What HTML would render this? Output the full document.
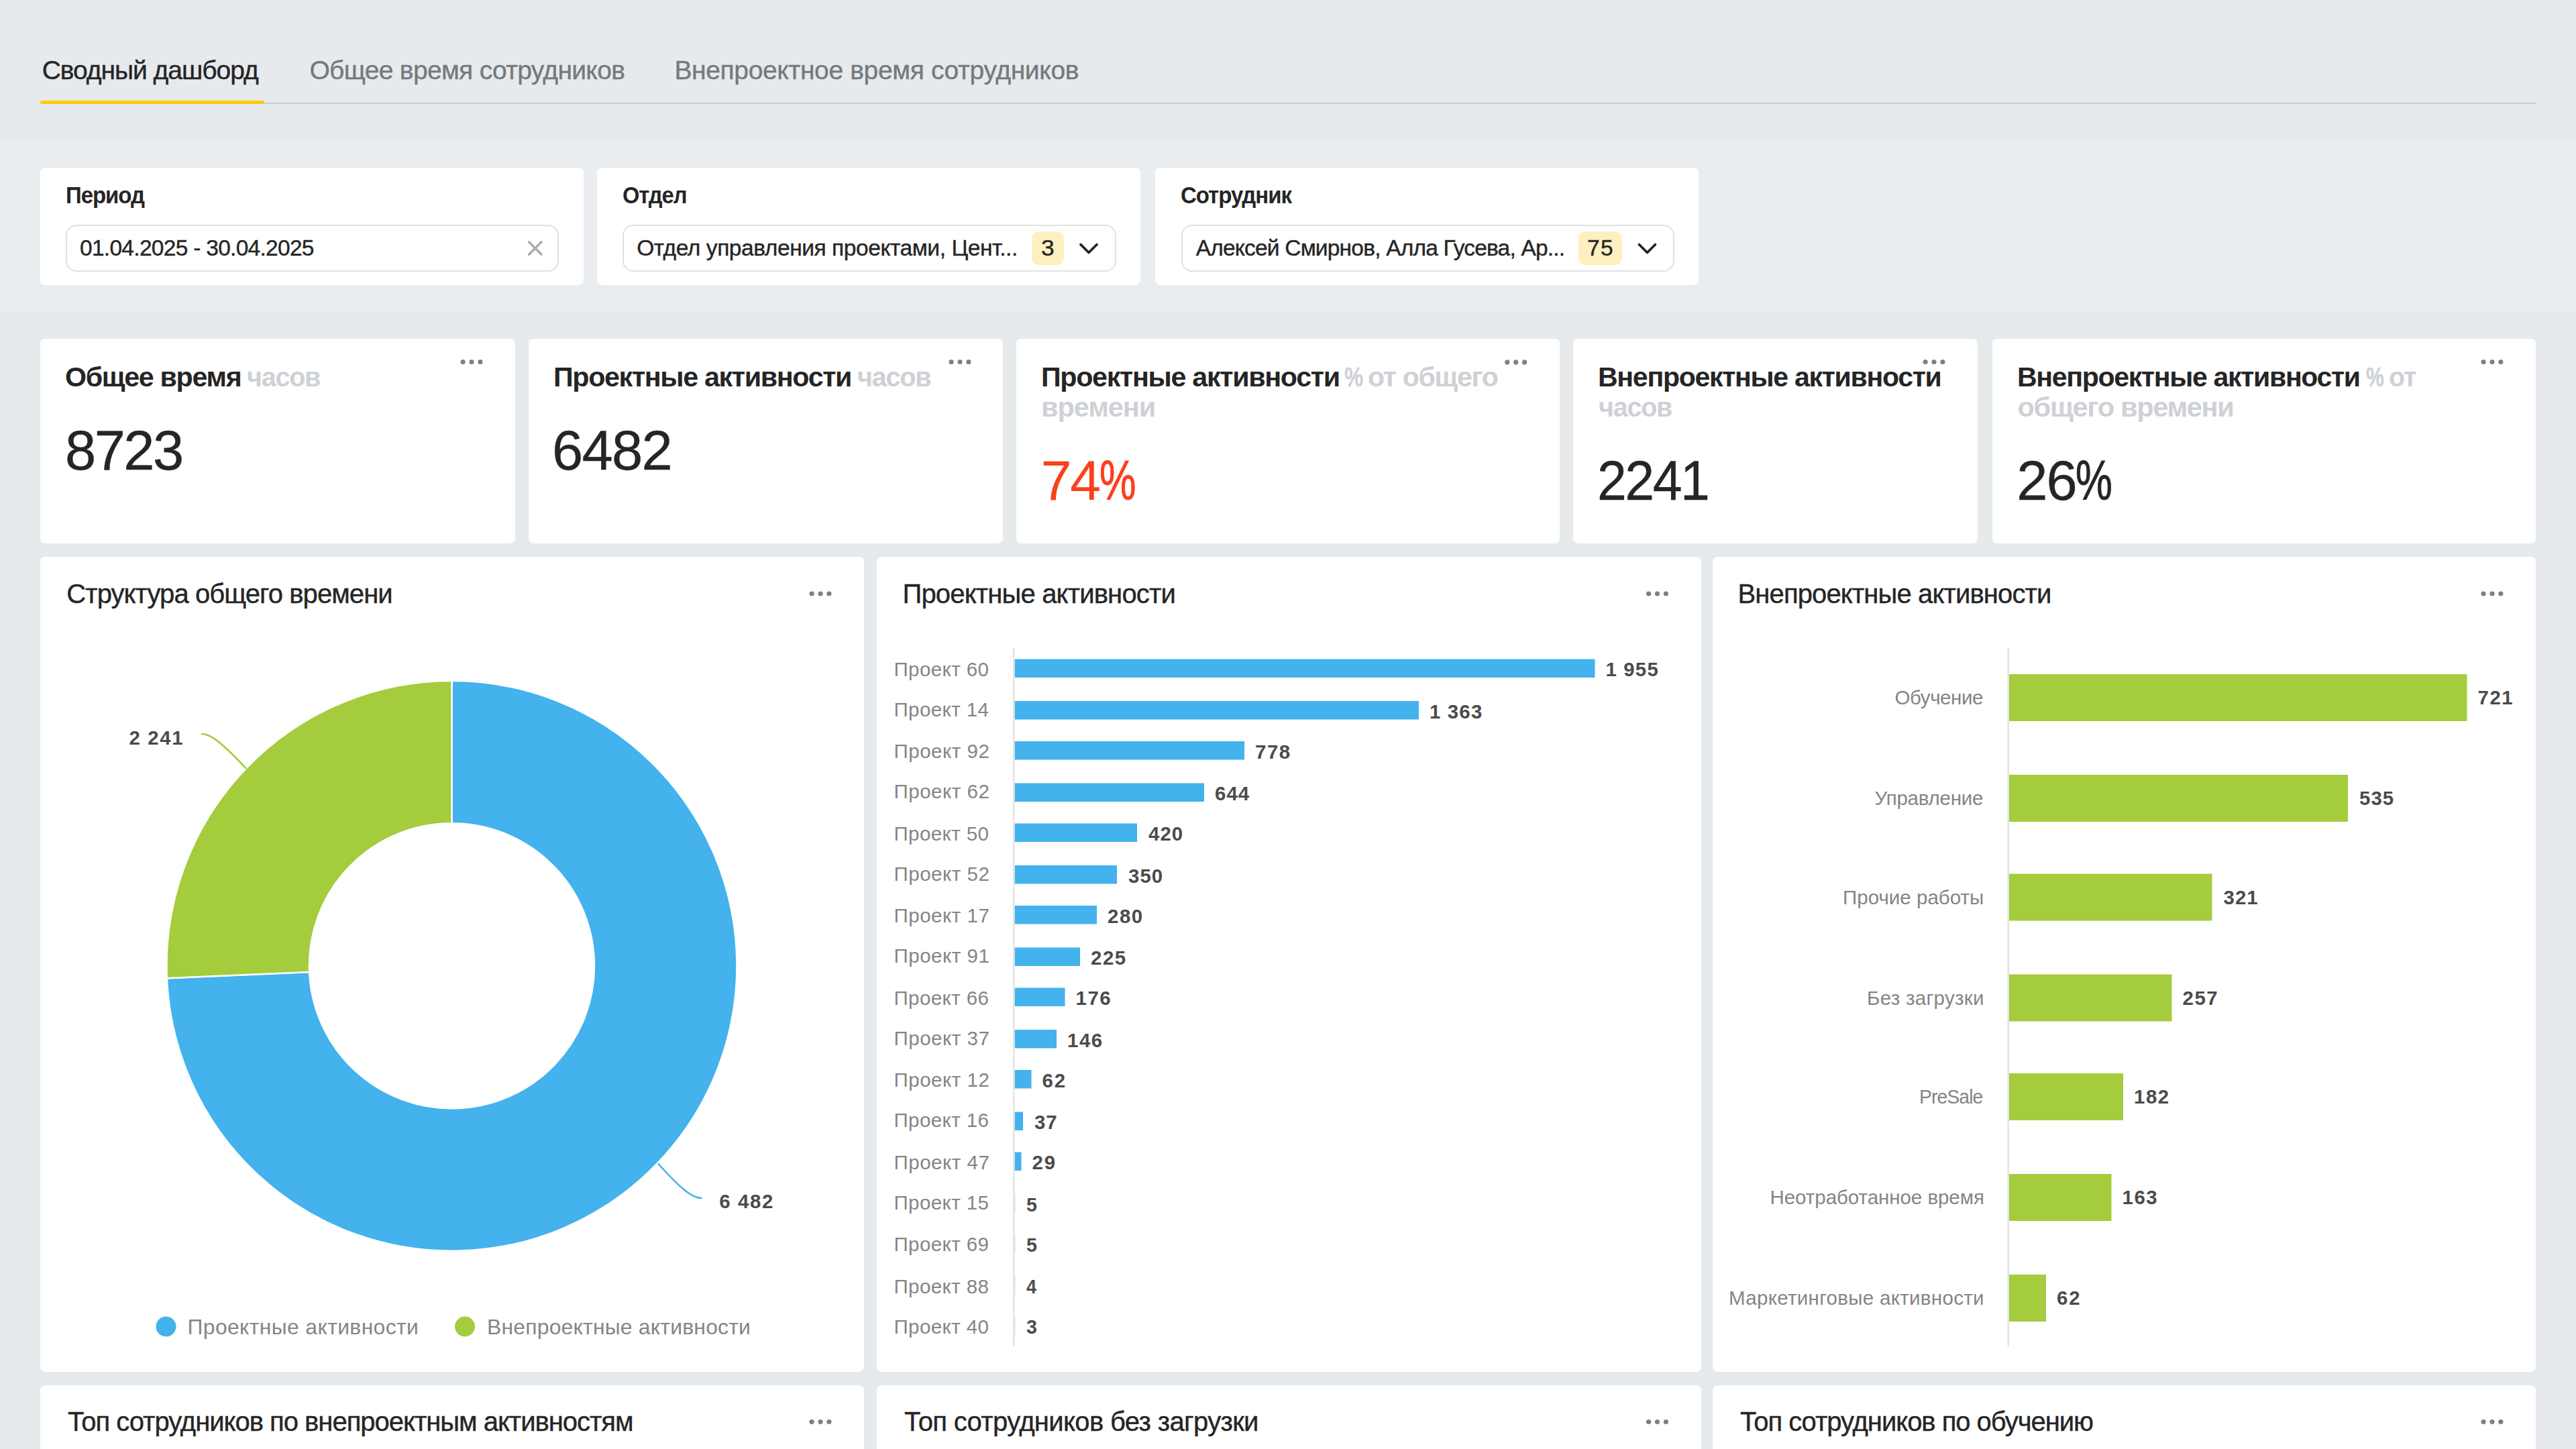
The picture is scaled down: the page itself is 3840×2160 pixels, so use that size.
<!DOCTYPE html>
<html lang="ru"><head><meta charset="utf-8"><title>Сводный дашборд</title>
<style>
html,body{margin:0;padding:0}
body{width:3840px;height:2160px;overflow:hidden;position:relative;background:#e6eaed;font-family:"Liberation Sans", sans-serif}
.band{position:absolute;left:0;top:210px;width:3840px;height:255px;background:#e9edf0}
.card{position:absolute;background:#fff}
.inp{position:absolute;box-sizing:border-box;border:2.5px solid #e2e2e2;border-radius:16px;background:#fff}
.badge{position:absolute;background:#fdf0c0;border-radius:11px}
.t{position:absolute;white-space:pre;line-height:1;font-family:"Liberation Sans", sans-serif;transform-origin:0 0}
.tabline{position:absolute;left:60px;top:152.5px;width:3720px;height:2.5px;background:#ccd0d4}
.tabsel{position:absolute;left:60px;top:150px;width:334px;height:5px;background:#ffcc00;border-radius:0 0 4px 4px}
svg{position:absolute;left:0;top:0}
</style></head><body>
<div class="band"></div>
<div class="tabline"></div><div class="tabsel"></div>
<div class="card" style="left:60px;top:250px;width:810px;height:175px;border-radius:7.5px"></div><div class="card" style="left:890px;top:250px;width:810px;height:175px;border-radius:7.5px"></div><div class="card" style="left:1722px;top:250px;width:810px;height:175px;border-radius:7.5px"></div><div class="card" style="left:60px;top:505px;width:708px;height:305px;border-radius:7.5px"></div><div class="card" style="left:788px;top:505px;width:707px;height:305px;border-radius:7.5px"></div><div class="card" style="left:1515px;top:505px;width:810px;height:305px;border-radius:7.5px"></div><div class="card" style="left:2345px;top:505px;width:602.5px;height:305px;border-radius:7.5px"></div><div class="card" style="left:2970px;top:505px;width:810px;height:305px;border-radius:7.5px"></div><div class="card" style="left:60px;top:830px;width:1227.5px;height:1214.5px;border-radius:7.5px"></div><div class="card" style="left:60px;top:2065px;width:1227.5px;height:135px;border-radius:7.5px"></div><div class="card" style="left:1307px;top:830px;width:1228.5px;height:1214.5px;border-radius:7.5px"></div><div class="card" style="left:1307px;top:2065px;width:1228.5px;height:135px;border-radius:7.5px"></div><div class="card" style="left:2552.5px;top:830px;width:1227.5px;height:1214.5px;border-radius:7.5px"></div><div class="card" style="left:2552.5px;top:2065px;width:1227.5px;height:135px;border-radius:7.5px"></div>
<div class="inp" style="left:98.2px;top:334.7px;width:735.1px;height:70.6px"></div><div class="inp" style="left:928.2px;top:334.7px;width:735.5px;height:70.6px"></div><div class="inp" style="left:1760.8px;top:334.7px;width:735.5px;height:70.6px"></div>
<div class="badge" style="left:1538px;top:345px;width:47.7px;height:50px"></div><div class="badge" style="left:2352.6px;top:345px;width:65.6px;height:50px"></div>
<svg width="3840" height="2160" viewBox="0 0 3840 2160">
<rect x="1512.5" y="982.5" width="865.0" height="27.5" fill="#43b2ed"/>
<rect x="1512.5" y="1045.0" width="602.5" height="27.5" fill="#43b2ed"/>
<rect x="1512.5" y="1105.0" width="342.5" height="27.5" fill="#43b2ed"/>
<rect x="1512.5" y="1167.5" width="282.5" height="27.5" fill="#43b2ed"/>
<rect x="1512.5" y="1227.5" width="182.5" height="27.5" fill="#43b2ed"/>
<rect x="1512.5" y="1290.0" width="152.5" height="27.5" fill="#43b2ed"/>
<rect x="1512.5" y="1350.0" width="122.5" height="27.5" fill="#43b2ed"/>
<rect x="1512.5" y="1412.5" width="97.5" height="27.5" fill="#43b2ed"/>
<rect x="1512.5" y="1472.5" width="75.0" height="27.5" fill="#43b2ed"/>
<rect x="1512.5" y="1535.0" width="62.5" height="27.5" fill="#43b2ed"/>
<rect x="1512.5" y="1595.0" width="25.0" height="27.5" fill="#43b2ed"/>
<rect x="1512.5" y="1657.5" width="12.5" height="27.5" fill="#43b2ed"/>
<rect x="1512.5" y="1717.5" width="10.0" height="27.5" fill="#43b2ed"/>
<rect x="1512.5" y="1780.0" width="1" height="27.5" fill="#43b2ed" opacity="0.35"/>
<rect x="1512.5" y="1840.0" width="1" height="27.5" fill="#43b2ed" opacity="0.35"/>
<rect x="1512.5" y="1902.5" width="1" height="27.5" fill="#43b2ed" opacity="0.35"/>
<rect x="1512.5" y="1962.5" width="1" height="27.5" fill="#43b2ed" opacity="0.35"/>
<rect x="2995" y="1005" width="682.5" height="70" fill="#a4cc3c"/>
<rect x="2995" y="1155" width="505.0" height="70" fill="#a4cc3c"/>
<rect x="2995" y="1302.5" width="302.5" height="70" fill="#a4cc3c"/>
<rect x="2995" y="1452.5" width="242.5" height="70" fill="#a4cc3c"/>
<rect x="2995" y="1600" width="170.0" height="70" fill="#a4cc3c"/>
<rect x="2995" y="1750" width="152.5" height="70" fill="#a4cc3c"/>
<rect x="2995" y="1900" width="55.0" height="70" fill="#a4cc3c"/>
<path d="M673.45,1014.8 A425.0,425.0 0 1 1 248.85,1458.24 L461.15,1449.02 A212.5,212.5 0 1 0 673.45,1227.3 Z" fill="#43b2ed" stroke="#fff" stroke-width="2.5" stroke-linejoin="round"/>
<path d="M248.85,1458.24 A425.0,425.0 0 0 1 673.45,1014.8 L673.45,1227.3 A212.5,212.5 0 0 0 461.15,1449.02 Z" fill="#a4cc3c" stroke="#fff" stroke-width="2.5" stroke-linejoin="round"/>
<path d="M300,1094 C312,1094 325,1101 367.3,1146" fill="none" stroke="#a4cc3c" stroke-width="2.5"/>
<path d="M1046.5,1786 C1034,1786 1020,1778 981,1734.5" fill="none" stroke="#43b2ed" stroke-width="2.5"/>
<circle cx="247.5" cy="1977.5" r="15" fill="#43b2ed"/><circle cx="693" cy="1977.5" r="15" fill="#a4cc3c"/>
<rect x="1510" y="965" width="2.5" height="1042" fill="#e3e3e3"/>
<rect x="2992.5" y="965" width="2.5" height="1042" fill="#e3e3e3"/>
<circle cx="690.1" cy="539.5" r="3.6" fill="#7f7f7f"/><circle cx="703.0" cy="539.5" r="3.6" fill="#7f7f7f"/><circle cx="715.9" cy="539.5" r="3.6" fill="#7f7f7f"/>
<circle cx="1418.1" cy="539.5" r="3.6" fill="#7f7f7f"/><circle cx="1431.0" cy="539.5" r="3.6" fill="#7f7f7f"/><circle cx="1443.9" cy="539.5" r="3.6" fill="#7f7f7f"/>
<circle cx="2246.8" cy="539.9" r="3.6" fill="#7f7f7f"/><circle cx="2259.7" cy="539.9" r="3.6" fill="#7f7f7f"/><circle cx="2272.6" cy="539.9" r="3.6" fill="#7f7f7f"/>
<circle cx="2870.1" cy="539.5" r="3.6" fill="#7f7f7f"/><circle cx="2883.0" cy="539.5" r="3.6" fill="#7f7f7f"/><circle cx="2895.9" cy="539.5" r="3.6" fill="#7f7f7f"/>
<circle cx="3702.1" cy="539.5" r="3.6" fill="#7f7f7f"/><circle cx="3715.0" cy="539.5" r="3.6" fill="#7f7f7f"/><circle cx="3727.9" cy="539.5" r="3.6" fill="#7f7f7f"/>
<circle cx="1210.1" cy="885" r="3.6" fill="#7f7f7f"/><circle cx="1223.0" cy="885" r="3.6" fill="#7f7f7f"/><circle cx="1235.9" cy="885" r="3.6" fill="#7f7f7f"/>
<circle cx="2457.6" cy="885" r="3.6" fill="#7f7f7f"/><circle cx="2470.5" cy="885" r="3.6" fill="#7f7f7f"/><circle cx="2483.4" cy="885" r="3.6" fill="#7f7f7f"/>
<circle cx="3702.1" cy="885" r="3.6" fill="#7f7f7f"/><circle cx="3715.0" cy="885" r="3.6" fill="#7f7f7f"/><circle cx="3727.9" cy="885" r="3.6" fill="#7f7f7f"/>
<circle cx="1210.1" cy="2119.5" r="3.6" fill="#7f7f7f"/><circle cx="1223.0" cy="2119.5" r="3.6" fill="#7f7f7f"/><circle cx="1235.9" cy="2119.5" r="3.6" fill="#7f7f7f"/>
<circle cx="2457.6" cy="2119.5" r="3.6" fill="#7f7f7f"/><circle cx="2470.5" cy="2119.5" r="3.6" fill="#7f7f7f"/><circle cx="2483.4" cy="2119.5" r="3.6" fill="#7f7f7f"/>
<circle cx="3702.1" cy="2119.5" r="3.6" fill="#7f7f7f"/><circle cx="3715.0" cy="2119.5" r="3.6" fill="#7f7f7f"/><circle cx="3727.9" cy="2119.5" r="3.6" fill="#7f7f7f"/>
<path d="M788.6,360.8 L807,379.2 M807,360.8 L788.6,379.2" stroke="#adadad" stroke-width="3.6" stroke-linecap="round" fill="none"/>
<path d="M1611,364.5 L1623,376.5 L1635,364.5" stroke="#252525" stroke-width="3.8" stroke-linecap="round" stroke-linejoin="round" fill="none"/>
<path d="M2443.5,364.5 L2455.5,376.5 L2467.5,364.5" stroke="#252525" stroke-width="3.8" stroke-linecap="round" stroke-linejoin="round" fill="none"/>
</svg>
<span class="t" style="left:62.7px;top:84.8px;font-size:39px;font-weight:400;color:#252525;letter-spacing:-1.04px;-webkit-text-stroke:0.4px #252525">Сводный дашборд</span>
<span class="t" style="left:461.4px;top:84.8px;font-size:39px;font-weight:400;color:#76797c;letter-spacing:-0.68px;-webkit-text-stroke:0.4px #76797c">Общее время сотрудников</span>
<span class="t" style="left:1005.4px;top:84.8px;font-size:39px;font-weight:400;color:#76797c;letter-spacing:-0.36px;-webkit-text-stroke:0.4px #76797c">Внепроектное время сотрудников</span>
<span class="t" style="left:97.9px;top:273.9px;font-size:34.2px;font-weight:700;color:#252525;letter-spacing:-1.09px;transform:scaleX(0.9648)">Период</span>
<span class="t" style="left:927.5px;top:273.9px;font-size:34.2px;font-weight:700;color:#252525;letter-spacing:-1.09px;transform:scaleX(0.9550)">Отдел</span>
<span class="t" style="left:1760.0px;top:273.9px;font-size:34.2px;font-weight:700;color:#252525;letter-spacing:-1.09px;transform:scaleX(0.9658)">Сотрудник</span>
<span class="t" style="left:119.0px;top:352.5px;font-size:33.5px;font-weight:400;color:#252525;letter-spacing:-0.71px;-webkit-text-stroke:0.4px #252525">01.04.2025 - 30.04.2025</span>
<span class="t" style="left:949.2px;top:352.5px;font-size:33.5px;font-weight:400;color:#252525;letter-spacing:-0.43px;-webkit-text-stroke:0.4px #252525">Отдел управления проектами, Цент...</span>
<span class="t" style="left:1782.7px;top:352.5px;font-size:33.5px;font-weight:400;color:#252525;letter-spacing:-0.80px;-webkit-text-stroke:0.4px #252525">Алексей Смирнов, Алла Гусева, Ар...</span>
<span class="t" style="left:1551.9px;top:352.5px;font-size:33.5px;font-weight:400;color:#252525;letter-spacing:0.00px;transform:scaleX(1.0588);-webkit-text-stroke:0.4px #252525">3</span>
<span class="t" style="left:2366.0px;top:352.5px;font-size:33.5px;font-weight:400;color:#252525;letter-spacing:1.37px;-webkit-text-stroke:0.4px #252525">75</span>
<span class="t" style="left:97.0px;top:540.7px;font-size:41.5px;font-weight:700;color:#252525;letter-spacing:-1.33px;transform:scaleX(0.9926)">Общее время</span>
<span class="t" style="left:367.5px;top:540.7px;font-size:41.5px;font-weight:700;color:#ced1d5;letter-spacing:-1.33px;transform:scaleX(0.9533)">часов</span>
<span class="t" style="left:825.0px;top:540.7px;font-size:41.5px;font-weight:700;color:#252525;letter-spacing:-1.33px;transform:scaleX(0.9931)">Проектные активности</span>
<span class="t" style="left:1277.8px;top:540.7px;font-size:41.5px;font-weight:700;color:#ced1d5;letter-spacing:-1.33px;transform:scaleX(0.9551)">часов</span>
<span class="t" style="left:1552.0px;top:540.7px;font-size:41.5px;font-weight:700;color:#252525;letter-spacing:-1.33px;transform:scaleX(0.9945)">Проектные активности</span>
<span class="t" style="left:2004.1px;top:540.7px;font-size:41.5px;font-weight:700;color:#ced1d5;letter-spacing:0.00px;transform:scaleX(0.7629);-webkit-text-stroke:0.50px #ced1d5">%</span>
<span class="t" style="left:2039.0px;top:540.7px;font-size:41.5px;font-weight:700;color:#ced1d5;letter-spacing:-1.33px;transform:scaleX(0.9904)">от общего</span>
<span class="t" style="left:1552.0px;top:586.2px;font-size:41.5px;font-weight:700;color:#ced1d5;letter-spacing:-1.09px">времени</span>
<span class="t" style="left:2382.0px;top:540.7px;font-size:41.5px;font-weight:700;color:#252525;letter-spacing:-1.33px;transform:scaleX(0.9900)">Внепроектные активности</span>
<span class="t" style="left:2382.5px;top:586.2px;font-size:41.5px;font-weight:700;color:#ced1d5;letter-spacing:-1.33px;transform:scaleX(0.9533)">часов</span>
<span class="t" style="left:3007.3px;top:540.7px;font-size:41.5px;font-weight:700;color:#252525;letter-spacing:-1.33px;transform:scaleX(0.9888)">Внепроектные активности</span>
<span class="t" style="left:3526.6px;top:540.7px;font-size:41.5px;font-weight:700;color:#ced1d5;letter-spacing:0.00px;transform:scaleX(0.7257);-webkit-text-stroke:0.50px #ced1d5">%</span>
<span class="t" style="left:3561.4px;top:540.7px;font-size:41.5px;font-weight:700;color:#ced1d5;letter-spacing:-1.33px;transform:scaleX(0.9526)">от</span>
<span class="t" style="left:3007.6px;top:586.2px;font-size:41.5px;font-weight:700;color:#ced1d5;letter-spacing:-1.33px">общего времени</span>
<span class="t" style="left:97.1px;top:629.5px;font-size:83px;font-weight:400;color:#252525;letter-spacing:-2.56px;-webkit-text-stroke:0.4px #252525">8723</span>
<span class="t" style="left:823.0px;top:629.5px;font-size:83px;font-weight:400;color:#252525;letter-spacing:-1.66px;-webkit-text-stroke:0.4px #252525">6482</span>
<span class="t" style="left:1551.5px;top:674.5px;font-size:83px;font-weight:400;color:#fc3f1d;letter-spacing:-2.66px">74</span>
<span class="t" style="left:1639.4px;top:674.5px;font-size:83px;font-weight:400;color:#fc3f1d;letter-spacing:0.00px;transform:scaleX(0.7377);-webkit-text-stroke:1.00px #fc3f1d">%</span>
<span class="t" style="left:2381.4px;top:674.5px;font-size:83px;font-weight:400;color:#252525;letter-spacing:-2.66px;transform:scaleX(0.9504);-webkit-text-stroke:0.4px #252525">2241</span>
<span class="t" style="left:3006.2px;top:674.5px;font-size:83px;font-weight:400;color:#252525;letter-spacing:-1.76px;-webkit-text-stroke:0.4px #252525">26</span>
<span class="t" style="left:3094.1px;top:674.5px;font-size:83px;font-weight:400;color:#252525;letter-spacing:0.00px;transform:scaleX(0.7420);-webkit-text-stroke:1.00px #252525">%</span>
<span class="t" style="left:99.3px;top:864.5px;font-size:40px;font-weight:400;color:#252525;letter-spacing:-0.93px;-webkit-text-stroke:0.4px #252525">Структура общего времени</span>
<span class="t" style="left:1345.5px;top:864.5px;font-size:40px;font-weight:400;color:#252525;letter-spacing:-0.83px;-webkit-text-stroke:0.4px #252525">Проектные активности</span>
<span class="t" style="left:2590.5px;top:864.5px;font-size:40px;font-weight:400;color:#252525;letter-spacing:-0.87px;-webkit-text-stroke:0.4px #252525">Внепроектные активности</span>
<span class="t" style="left:101.0px;top:2098.5px;font-size:40px;font-weight:400;color:#252525;letter-spacing:-1.01px;-webkit-text-stroke:0.4px #252525">Топ сотрудников по внепроектным активностям</span>
<span class="t" style="left:1348.0px;top:2098.5px;font-size:40px;font-weight:400;color:#252525;letter-spacing:-0.64px;-webkit-text-stroke:0.4px #252525">Топ сотрудников без загрузки</span>
<span class="t" style="left:2594.0px;top:2098.5px;font-size:40px;font-weight:400;color:#252525;letter-spacing:-1.04px;-webkit-text-stroke:0.4px #252525">Топ сотрудников по обучению</span>
<span class="t" style="left:192.5px;top:1085.0px;font-size:29.4px;font-weight:700;color:#4b4b4b;letter-spacing:1.65px">2 241</span>
<span class="t" style="left:1072.3px;top:1775.5px;font-size:29.4px;font-weight:700;color:#4b4b4b;letter-spacing:1.62px">6 482</span>
<span class="t" style="left:279.5px;top:1963.0px;font-size:31.8px;font-weight:400;color:#858585;letter-spacing:0.42px">Проектные активности</span>
<span class="t" style="left:726.0px;top:1963.0px;font-size:31.8px;font-weight:400;color:#858585;letter-spacing:0.26px">Внепроектные активности</span>
<span class="t" style="left:1332.5px;top:982.7px;font-size:29.5px;font-weight:400;color:#858585;letter-spacing:0.40px">Проект 60</span>
<span class="t" style="left:2393.5px;top:983.0px;font-size:29.4px;font-weight:700;color:#4b4b4b;letter-spacing:1.17px">1 955</span>
<span class="t" style="left:1332.5px;top:1042.7px;font-size:29.5px;font-weight:400;color:#858585;letter-spacing:0.40px">Проект 14</span>
<span class="t" style="left:2131.0px;top:1045.5px;font-size:29.4px;font-weight:700;color:#4b4b4b;letter-spacing:1.17px">1 363</span>
<span class="t" style="left:1332.5px;top:1105.2px;font-size:29.5px;font-weight:400;color:#858585;letter-spacing:0.53px">Проект 92</span>
<span class="t" style="left:1871.0px;top:1105.5px;font-size:29.4px;font-weight:700;color:#4b4b4b;letter-spacing:1.55px">778</span>
<span class="t" style="left:1332.5px;top:1165.2px;font-size:29.5px;font-weight:400;color:#858585;letter-spacing:0.53px">Проект 62</span>
<span class="t" style="left:1811.0px;top:1168.0px;font-size:29.4px;font-weight:700;color:#4b4b4b;letter-spacing:1.05px">644</span>
<span class="t" style="left:1332.5px;top:1227.7px;font-size:29.5px;font-weight:400;color:#858585;letter-spacing:0.40px">Проект 50</span>
<span class="t" style="left:1712.0px;top:1228.0px;font-size:29.4px;font-weight:700;color:#4b4b4b;letter-spacing:1.05px">420</span>
<span class="t" style="left:1332.5px;top:1287.7px;font-size:29.5px;font-weight:400;color:#858585;letter-spacing:0.53px">Проект 52</span>
<span class="t" style="left:1682.0px;top:1290.5px;font-size:29.4px;font-weight:700;color:#4b4b4b;letter-spacing:1.05px">350</span>
<span class="t" style="left:1332.5px;top:1350.2px;font-size:29.5px;font-weight:400;color:#858585;letter-spacing:0.53px">Проект 17</span>
<span class="t" style="left:1651.0px;top:1350.5px;font-size:29.4px;font-weight:700;color:#4b4b4b;letter-spacing:1.55px">280</span>
<span class="t" style="left:1332.5px;top:1410.2px;font-size:29.5px;font-weight:400;color:#858585;letter-spacing:0.53px">Проект 91</span>
<span class="t" style="left:1626.0px;top:1413.0px;font-size:29.4px;font-weight:700;color:#4b4b4b;letter-spacing:1.55px">225</span>
<span class="t" style="left:1332.5px;top:1472.7px;font-size:29.5px;font-weight:400;color:#858585;letter-spacing:0.40px">Проект 66</span>
<span class="t" style="left:1603.5px;top:1473.0px;font-size:29.4px;font-weight:700;color:#4b4b4b;letter-spacing:1.55px">176</span>
<span class="t" style="left:1332.5px;top:1532.7px;font-size:29.5px;font-weight:400;color:#858585;letter-spacing:0.53px">Проект 37</span>
<span class="t" style="left:1591.0px;top:1535.5px;font-size:29.4px;font-weight:700;color:#4b4b4b;letter-spacing:1.55px">146</span>
<span class="t" style="left:1332.5px;top:1595.2px;font-size:29.5px;font-weight:400;color:#858585;letter-spacing:0.53px">Проект 12</span>
<span class="t" style="left:1553.5px;top:1595.5px;font-size:29.4px;font-weight:700;color:#4b4b4b;letter-spacing:1.85px">62</span>
<span class="t" style="left:1332.5px;top:1655.2px;font-size:29.5px;font-weight:400;color:#858585;letter-spacing:0.40px">Проект 16</span>
<span class="t" style="left:1542.0px;top:1658.0px;font-size:29.4px;font-weight:700;color:#4b4b4b;letter-spacing:0.85px">37</span>
<span class="t" style="left:1332.5px;top:1717.7px;font-size:29.5px;font-weight:400;color:#858585;letter-spacing:0.53px">Проект 47</span>
<span class="t" style="left:1538.5px;top:1718.0px;font-size:29.4px;font-weight:700;color:#4b4b4b;letter-spacing:1.85px">29</span>
<span class="t" style="left:1332.5px;top:1777.7px;font-size:29.5px;font-weight:400;color:#858585;letter-spacing:0.40px">Проект 15</span>
<span class="t" style="left:1529.5px;top:1780.5px;font-size:29.4px;font-weight:700;color:#4b4b4b;letter-spacing:0.00px;transform:scaleX(0.9750)">5</span>
<span class="t" style="left:1332.5px;top:1840.2px;font-size:29.5px;font-weight:400;color:#858585;letter-spacing:0.40px">Проект 69</span>
<span class="t" style="left:1529.5px;top:1840.5px;font-size:29.4px;font-weight:700;color:#4b4b4b;letter-spacing:0.00px;transform:scaleX(0.9750)">5</span>
<span class="t" style="left:1332.5px;top:1902.7px;font-size:29.5px;font-weight:400;color:#858585;letter-spacing:0.40px">Проект 88</span>
<span class="t" style="left:1529.5px;top:1903.0px;font-size:29.4px;font-weight:700;color:#4b4b4b;letter-spacing:0.00px;transform:scaleX(0.9176)">4</span>
<span class="t" style="left:1332.5px;top:1962.7px;font-size:29.5px;font-weight:400;color:#858585;letter-spacing:0.40px">Проект 40</span>
<span class="t" style="left:1529.5px;top:1963.0px;font-size:29.4px;font-weight:700;color:#4b4b4b;letter-spacing:0.00px;transform:scaleX(0.9750)">3</span>
<span class="t" style="left:2824.5px;top:1025.2px;font-size:29.5px;font-weight:400;color:#858585;letter-spacing:-0.43px">Обучение</span>
<span class="t" style="left:3693.5px;top:1025.0px;font-size:29.4px;font-weight:700;color:#4b4b4b;letter-spacing:1.55px">721</span>
<span class="t" style="left:2794.5px;top:1175.2px;font-size:29.5px;font-weight:400;color:#858585;letter-spacing:-0.23px">Управление</span>
<span class="t" style="left:3517.0px;top:1175.0px;font-size:29.4px;font-weight:700;color:#4b4b4b;letter-spacing:1.05px">535</span>
<span class="t" style="left:2747.0px;top:1322.7px;font-size:29.5px;font-weight:400;color:#858585;letter-spacing:0.02px">Прочие работы</span>
<span class="t" style="left:3314.5px;top:1322.5px;font-size:29.4px;font-weight:700;color:#4b4b4b;letter-spacing:1.05px">321</span>
<span class="t" style="left:2783.0px;top:1472.7px;font-size:29.5px;font-weight:400;color:#858585;letter-spacing:0.29px">Без загрузки</span>
<span class="t" style="left:3253.5px;top:1472.5px;font-size:29.4px;font-weight:700;color:#4b4b4b;letter-spacing:1.55px">257</span>
<span class="t" style="left:2861.1px;top:1620.2px;font-size:29.5px;font-weight:400;color:#858585;letter-spacing:-0.94px;transform:scaleX(0.9600)">PreSale</span>
<span class="t" style="left:3181.0px;top:1620.0px;font-size:29.4px;font-weight:700;color:#4b4b4b;letter-spacing:1.55px">182</span>
<span class="t" style="left:2638.5px;top:1770.2px;font-size:29.5px;font-weight:400;color:#858585;letter-spacing:-0.05px">Неотработанное время</span>
<span class="t" style="left:3163.5px;top:1770.0px;font-size:29.4px;font-weight:700;color:#4b4b4b;letter-spacing:1.55px">163</span>
<span class="t" style="left:2577.0px;top:1920.2px;font-size:29.5px;font-weight:400;color:#858585;letter-spacing:0.31px">Маркетинговые активности</span>
<span class="t" style="left:3066.0px;top:1920.0px;font-size:29.4px;font-weight:700;color:#4b4b4b;letter-spacing:1.85px">62</span>
</body></html>
